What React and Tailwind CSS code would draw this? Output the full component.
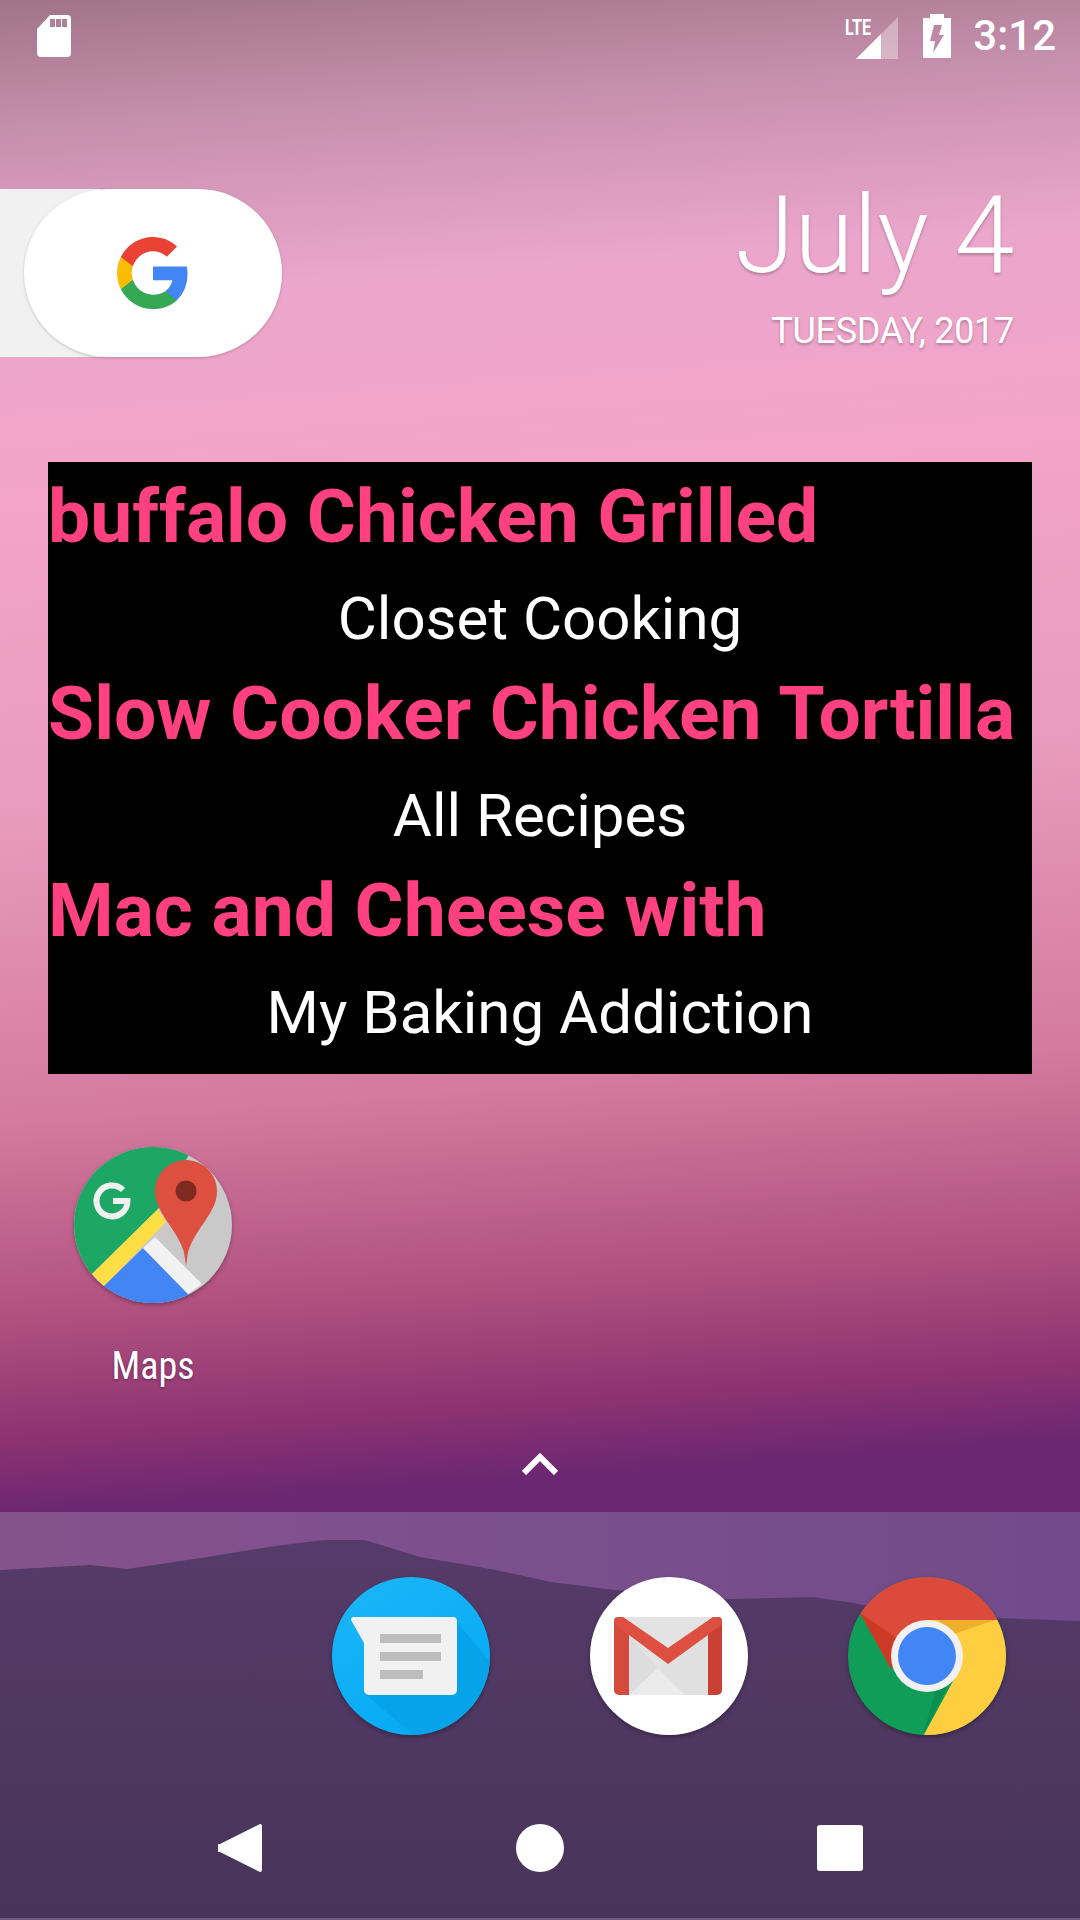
const RECIPES = [
  { title: "buffalo Chicken Grilled", source: "Closet Cooking" },
  { title: "Slow Cooker Chicken Tortilla", source: "All Recipes" },
  { title: "Mac and Cheese with", source: "My Baking Addiction" },
];

const SimIcon = () => (
  <svg width="34" height="42" viewBox="0 0 34 42">
    <path
      fill="#fff"
      d="M13 0H30a4 4 0 0 1 4 4V38a4 4 0 0 1-4 4H4a4 4 0 0 1-4-4V14Z"
    />
    <rect x="13" y="4" width="5" height="8" fill="#b0809a" />
    <rect x="19" y="4" width="5" height="8" fill="#b0809a" />
    <rect x="25" y="4" width="5" height="8" fill="#b0809a" />
  </svg>
);

const SignalIcon = () => (
  <svg width="53" height="48" viewBox="0 -4 53 48">
    <polygon points="36,18 53,1 53,43 36,43" fill="#fff" fillOpacity="0.35" />
    <polygon points="36,18 36,43 11,43" fill="#fff" />
    <text x="0" y="19" fill="#fff" fontSize="22" fontWeight="700" fontFamily="Roboto, sans-serif" textLength="26" lengthAdjust="spacingAndGlyphs">
      LTE
    </text>
  </svg>
);

const BatteryIcon = () => (
  <svg width="28" height="44" viewBox="0 0 28 44">
    <path
      fillRule="evenodd"
      fill="#fff"
      d="M7 0H21V4H28V44H0V4H7ZM11 11 19 11 16 21H21L10 39 12 27H7Z"
    />
  </svg>
);

const GoogleG = () => (
  <svg width="72" height="72" viewBox="0 0 48 48">
    <path fill="#4285f4" d="M47 24.5c0-1.7-.15-3.3-.45-4.9H24v9.3h12.9c-.55 3-2.25 5.5-4.75 7.2v6h7.7C44.35 38 47 31.8 47 24.5z" />
    <path fill="#34a853" d="M24 48c6.5 0 11.9-2.15 15.85-5.85l-7.7-6c-2.15 1.45-4.9 2.3-8.15 2.3-6.25 0-11.55-4.2-13.45-9.9H2.6v6.2C6.55 42.6 14.65 48 24 48z" />
    <path fill="#fbbc05" d="M10.55 28.55A14.4 14.4 0 0 1 9.8 24c0-1.6.27-3.13.75-4.55v-6.2H2.6A24 24 0 0 0 0 24c0 3.9.93 7.55 2.6 10.75z" />
    <path fill="#ea4335" d="M24 9.55c3.5 0 6.7 1.2 9.2 3.6l6.85-6.85C35.9 2.45 30.5 0 24 0 14.65 0 6.55 5.4 2.6 13.25l7.95 6.2C12.45 13.75 17.75 9.55 24 9.55z" />
  </svg>
);

const MapsIcon = () => (
  <svg width="158" height="158" viewBox="0 0 158 158" className="drop-shadow-[0_2px_2px_rgba(0,0,0,0.3)]">
    <defs>
      <clipPath id="mapsClip">
        <ellipse cx="79" cy="78" rx="79" ry="78" />
      </clipPath>
    </defs>
    <g clipPath="url(#mapsClip)">
      <rect width="158" height="158" fill="#c9c9c9" />
      <polygon points="-5,-10 125,-10 84,62 18,127 -5,127" fill="#1da764" />
      <polygon points="84,62 92,75 30,139 18,127" fill="#fdde45" />
      <polygon points="69,101 30,139 20,170 120,170 114,147" fill="#4285f4" />
      <polygon points="81,90 128,137 114,147 69,101" fill="#f1f1f1" />
    </g>
    <path d="M49 43A15.500 15.500 0 1 0 53.500 54H39" fill="none" stroke="#f1f1f1" strokeWidth="6" />
    <path
      fill="#dd4f3f"
      d="M112 13C129 13 143 27 143 44C143 66 122 80 114 105L112 119L110 105C102 80 81 66 81 44C81 27 95 13 112 13Z"
    />
    <circle cx="112" cy="44" r="10.500" fill="#7e2a21" />
  </svg>
);

const MessagesIcon = () => (
  <svg width="158" height="158" viewBox="0 0 158 158" className="drop-shadow-[0_2px_2px_rgba(0,0,0,0.3)]">
    <defs>
      <clipPath id="msgClip">
        <circle cx="79" cy="79" r="79" />
      </clipPath>
      <linearGradient id="msgBlue" x1="0" y1="0" x2="0.6" y2="1">
        <stop offset="0" stopColor="#1db6f9" />
        <stop offset="1" stopColor="#05aaf3" />
      </linearGradient>
    </defs>
    <circle cx="79" cy="79" r="79" fill="url(#msgBlue)" />
    <g clipPath="url(#msgClip)">
      <polygon points="125,45 158,85 158,158 82,158 34,118 125,118" fill="#07a3e8" />
    </g>
    <path
      fill="#f1f1f1"
      d="M19 43a2.500 2.500 0 0 1 2.400-3H121a4 4 0 0 1 4 4V113a5 5 0 0 1-5 5H37a5 5 0 0 1-5-5V66Z"
    />
    <rect x="48" y="57" width="61" height="9" fill="#bdbdbd" />
    <rect x="48" y="75" width="61" height="9" fill="#bdbdbd" />
    <rect x="48" y="93" width="43" height="9" fill="#bdbdbd" />
  </svg>
);

const GmailIcon = () => (
  <svg width="158" height="158" viewBox="0 0 158 158" className="drop-shadow-[0_2px_2px_rgba(0,0,0,0.3)]">
    <circle cx="79" cy="79" r="79" fill="#fff" />
    <rect x="30" y="40" width="96" height="78" fill="#e3e3e3" />
    <polygon points="39,58 68,91 39,118" fill="#dddddd" />
    <polygon points="39,118 68,91 95,118" fill="#ebebeb" />
    <polygon points="78,87 118,58 118,118 95,118 68,91" fill="#e0e0e0" />
    <path fill="#d44b3e" d="M24 44a4 4 0 0 1 4-4h3l8 8V118H29a5 5 0 0 1-5-5Z" />
    <path fill="#c94135" d="M132 44a4 4 0 0 0-4-4h-3l-7 8V118h9a5 5 0 0 0 5-5Z" />
    <polygon points="24,44 28,40 33,40 78,71 123,40 128,40 132,44 132,47 118,58 78,87 39,58 24,47" fill="#dd4f40" />
  </svg>
);

const ChromeIcon = () => (
  <svg width="158" height="158" viewBox="0 0 158 158" className="drop-shadow-[0_2px_2px_rgba(0,0,0,0.3)]">
    <defs>
      <clipPath id="chromeClip">
        <circle cx="79" cy="79" r="79" />
      </clipPath>
    </defs>
    <g clipPath="url(#chromeClip)">
      <rect width="158" height="158" fill="#0f9d58" />
      <polygon points="79,43 165,43 165,165 72,165 110,95" fill="#ffcd40" />
      <polygon points="12,36 43,92 79,43 165,43 165,-5 12,-5" fill="#db4a3a" />
      <polygon points="12,36 43,92 50,62" fill="#cc3a26" />
      <polygon points="90,43 147,43 103,58" fill="#ecb02c" />
      <polygon points="103,103 75,158 88,112" fill="#0b8f50" />
    </g>
    <circle cx="79" cy="79" r="36" fill="#f1f1f1" />
    <circle cx="79" cy="79" r="29" fill="#4285f4" />
  </svg>
);

const App = () => {
  return (
    <div className="relative flex h-[1920px] w-[1080px] flex-col overflow-hidden bg-[linear-gradient(176deg,#a07489_0px,#c68fac_130px,#eba6cb_300px,#f3a4c8_500px,#e99cbf_800px,#d47a9f_1120px,#b0507f_1320px,#8c3272_1440px,#6b2772_1512px,#6b2772_1920px)] font-['Roboto',sans-serif] text-white">
      {/* wallpaper hills and dock tint, behind everything */}
      <svg className="absolute left-0 top-[1512px]" width="1080" height="408" viewBox="0 0 1080 408">
        <defs>
          <linearGradient id="dockTint" x1="0" y1="0" x2="1" y2="0">
            <stop offset="0" stopColor="#85538c" />
            <stop offset="1" stopColor="#714b8c" />
          </linearGradient>
          <linearGradient id="hillTint" x1="0" y1="0" x2="0" y2="1">
            <stop offset="0" stopColor="#553b69" />
            <stop offset="1" stopColor="#48345a" />
          </linearGradient>
        </defs>
        <rect width="1080" height="408" fill="url(#dockTint)" />
        <path
          fill="url(#hillTint)"
          d="M0 58L90 53L127 57L207 45L275 34L324 28L365 28L420 45L496 58L551 70L606 77L689 86L730 87L813 85L854 91L916 105L999 106L1080 109V408H0Z"
        />
        <rect y="406" width="1080" height="2" fill="#6d5a80" />
      </svg>

      <div className="relative flex h-[72px] items-center justify-between pl-[37px] pr-[24px]">
        <SimIcon />
        <div className="flex items-center">
          <SignalIcon />
          <div className="ml-[25px]">
            <BatteryIcon />
          </div>
          <span className="ml-[22px] text-[42px] font-medium leading-[42px]">3:12</span>
        </div>
      </div>

      <div className="relative mt-[117px] flex h-[168px] items-start justify-between pr-[66px]">
        <div className="flex h-[168px] w-[282px] bg-[linear-gradient(90deg,#f1f1f1_100px,transparent_100px)]">
          <div className="ml-[24px] flex h-[168px] w-[258px] items-center justify-center rounded-[84px] bg-white shadow-[0_1px_3px_rgba(0,0,0,0.2)]">
            <GoogleG />
          </div>
        </div>
        <div className="flex flex-col items-end [text-shadow:0_2px_3px_rgba(0,0,0,0.25)]">
          <span className="-mt-[19px] text-[108px] font-light leading-[130px] tracking-[-0.3px]">July 4</span>
          <span className="mt-[10px] text-[36px] leading-[42px] tracking-[-0.3px]">TUESDAY, 2017</span>
        </div>
      </div>

      <div className="relative mx-[48px] mt-[105px] h-[612px] w-[984px] bg-black">
        {RECIPES.map((recipe) => (
          <div key={recipe.title} className="h-[197px] pt-[10px]">
            <div className="text-[75px] font-bold leading-[88px] whitespace-nowrap text-[#ff4081]">{recipe.title}</div>
            <div className="mt-[24px] text-center text-[60px] leading-[70px]">{recipe.source}</div>
          </div>
        ))}
      </div>

      <div className="relative ml-[74px] mt-[73px] flex w-[158px] flex-col items-center">
        <MapsIcon />
        <span className="mt-[40px] text-[38px] leading-[42px] [font-stretch:condensed] [text-shadow:0_1px_3px_rgba(0,0,0,0.4)]">Maps</span>
      </div>

      <div className="relative mt-[66px] flex justify-center">
        <svg width="36" height="22" viewBox="0 0 36 22">
          <path d="M2 20 18 4 34 20" fill="none" stroke="#fff" strokeWidth="6" />
        </svg>
      </div>

      <div className="relative mt-[102px] flex justify-between pl-[332px] pr-[74px]">
        <MessagesIcon />
        <GmailIcon />
        <ChromeIcon />
      </div>

      <div className="relative mt-[89px] flex items-center justify-between pl-[218px] pr-[217px]">
        <svg width="44" height="48" viewBox="0 0 44 48">
          <path fill="#fff" d="M42 0a2 2 0 0 1 2 2V46a2 2 0 0 1-2 2L2 28a4 4 0 0 1 0-8Z" />
        </svg>
        <div className="h-[48px] w-[48px] rounded-full bg-white" />
        <div className="h-[46px] w-[46px] rounded-[3px] bg-white" />
      </div>
    </div>
  );
};

export default App;
